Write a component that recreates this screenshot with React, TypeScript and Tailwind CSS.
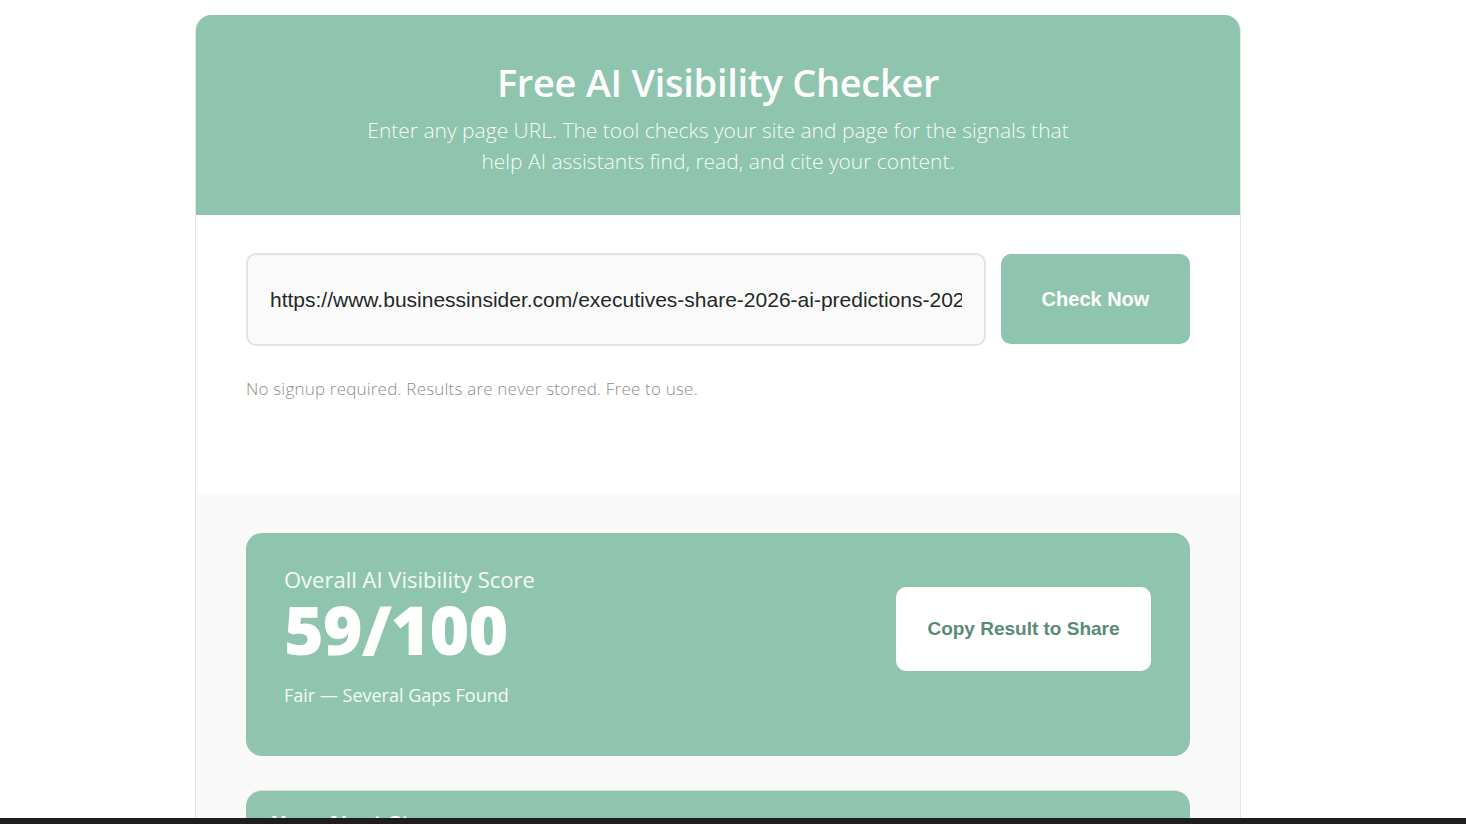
export default function App() {
  return (
    <div className="min-h-screen bg-white pt-[15px]" style={{ fontFamily: '"Open Sans", "Noto Sans", sans-serif' }}>
      <div className="ml-[195px] w-[1046px] overflow-hidden rounded-t-[16px] border-x border-[#e6e6e6]">
        {/* Header */}
        <div className="bg-[#8fc5ae] h-[200px] flex flex-col items-center pt-[42px] text-white">
          <h1 className="text-[38px] font-semibold leading-[50px] tracking-[-0.3px]">Free AI Visibility Checker</h1>
          <p className="mt-[8px] max-w-[720px] text-center text-[21px] font-light leading-[31px] text-white/95">
            Enter any page URL. The tool checks your site and page for the signals that help AI assistants find, read, and cite your content.
          </p>
        </div>

        {/* Form */}
        <div className="bg-white h-[279px] px-[50px] pt-[38px]">
          <div className="flex gap-[15px]">
            <input
              readOnly
              value="https://www.businessinsider.com/executives-share-2026-ai-predictions-2025-12"
              className="h-[93px] flex-1 rounded-[10px] border-2 border-[#e3e3e3] bg-[#fafafa] px-[22px] text-[21px] text-[#1f2a26] outline-none"
              style={{ fontFamily: '"Liberation Sans", Arial, sans-serif' }}
            />
            <button
              className="mt-px h-[90px] w-[189px] rounded-[10px] bg-[#8fc5ae] text-[20px] font-bold text-white"
              style={{ fontFamily: '"Liberation Sans", Arial, sans-serif' }}
            >
              Check Now
            </button>
          </div>
          <p className="mt-[30px] text-[17px] font-light tracking-[0.2px] text-[#8e8e8e]">No signup required. Results are never stored. Free to use.</p>
        </div>

        {/* Results */}
        <div className="bg-[#f9f9f9] px-[50px] pt-[39px] pb-[40px]">
          <div className="flex h-[223px] items-start justify-between rounded-[16px] bg-[#8fc5ae] pl-[38px] pr-[39px] pt-[32px] text-white">
            <div>
              <div className="text-[22px] font-medium text-white/90 leading-[28px]">Overall AI Visibility Score</div>
              <div className="text-[68px] font-extrabold leading-[72px] tracking-[-1px]">59/100</div>
              <div className="mt-[18px] text-[18px] text-white/90 leading-[24px]">Fair — Several Gaps Found</div>
            </div>
            <button
              className="mt-[22px] h-[84px] w-[255px] rounded-[10px] bg-white text-[19px] font-bold text-[#5a8a77]"
              style={{ fontFamily: '"Liberation Sans", Arial, sans-serif' }}
            >
              Copy Result to Share
            </button>
          </div>

          <div className="mt-[34px] h-[200px] rounded-[16px] border-t border-[#dcdcdc] bg-[#8fc5ae] px-[26px] pt-[16px]">
            <div className="text-[22px] font-bold leading-[30px] text-white">Your Next Step</div>
          </div>
        </div>
      </div>

      <div className="fixed bottom-0 left-0 right-0 h-[6px] bg-[#1e1e1e]" />
    </div>
  )
}
